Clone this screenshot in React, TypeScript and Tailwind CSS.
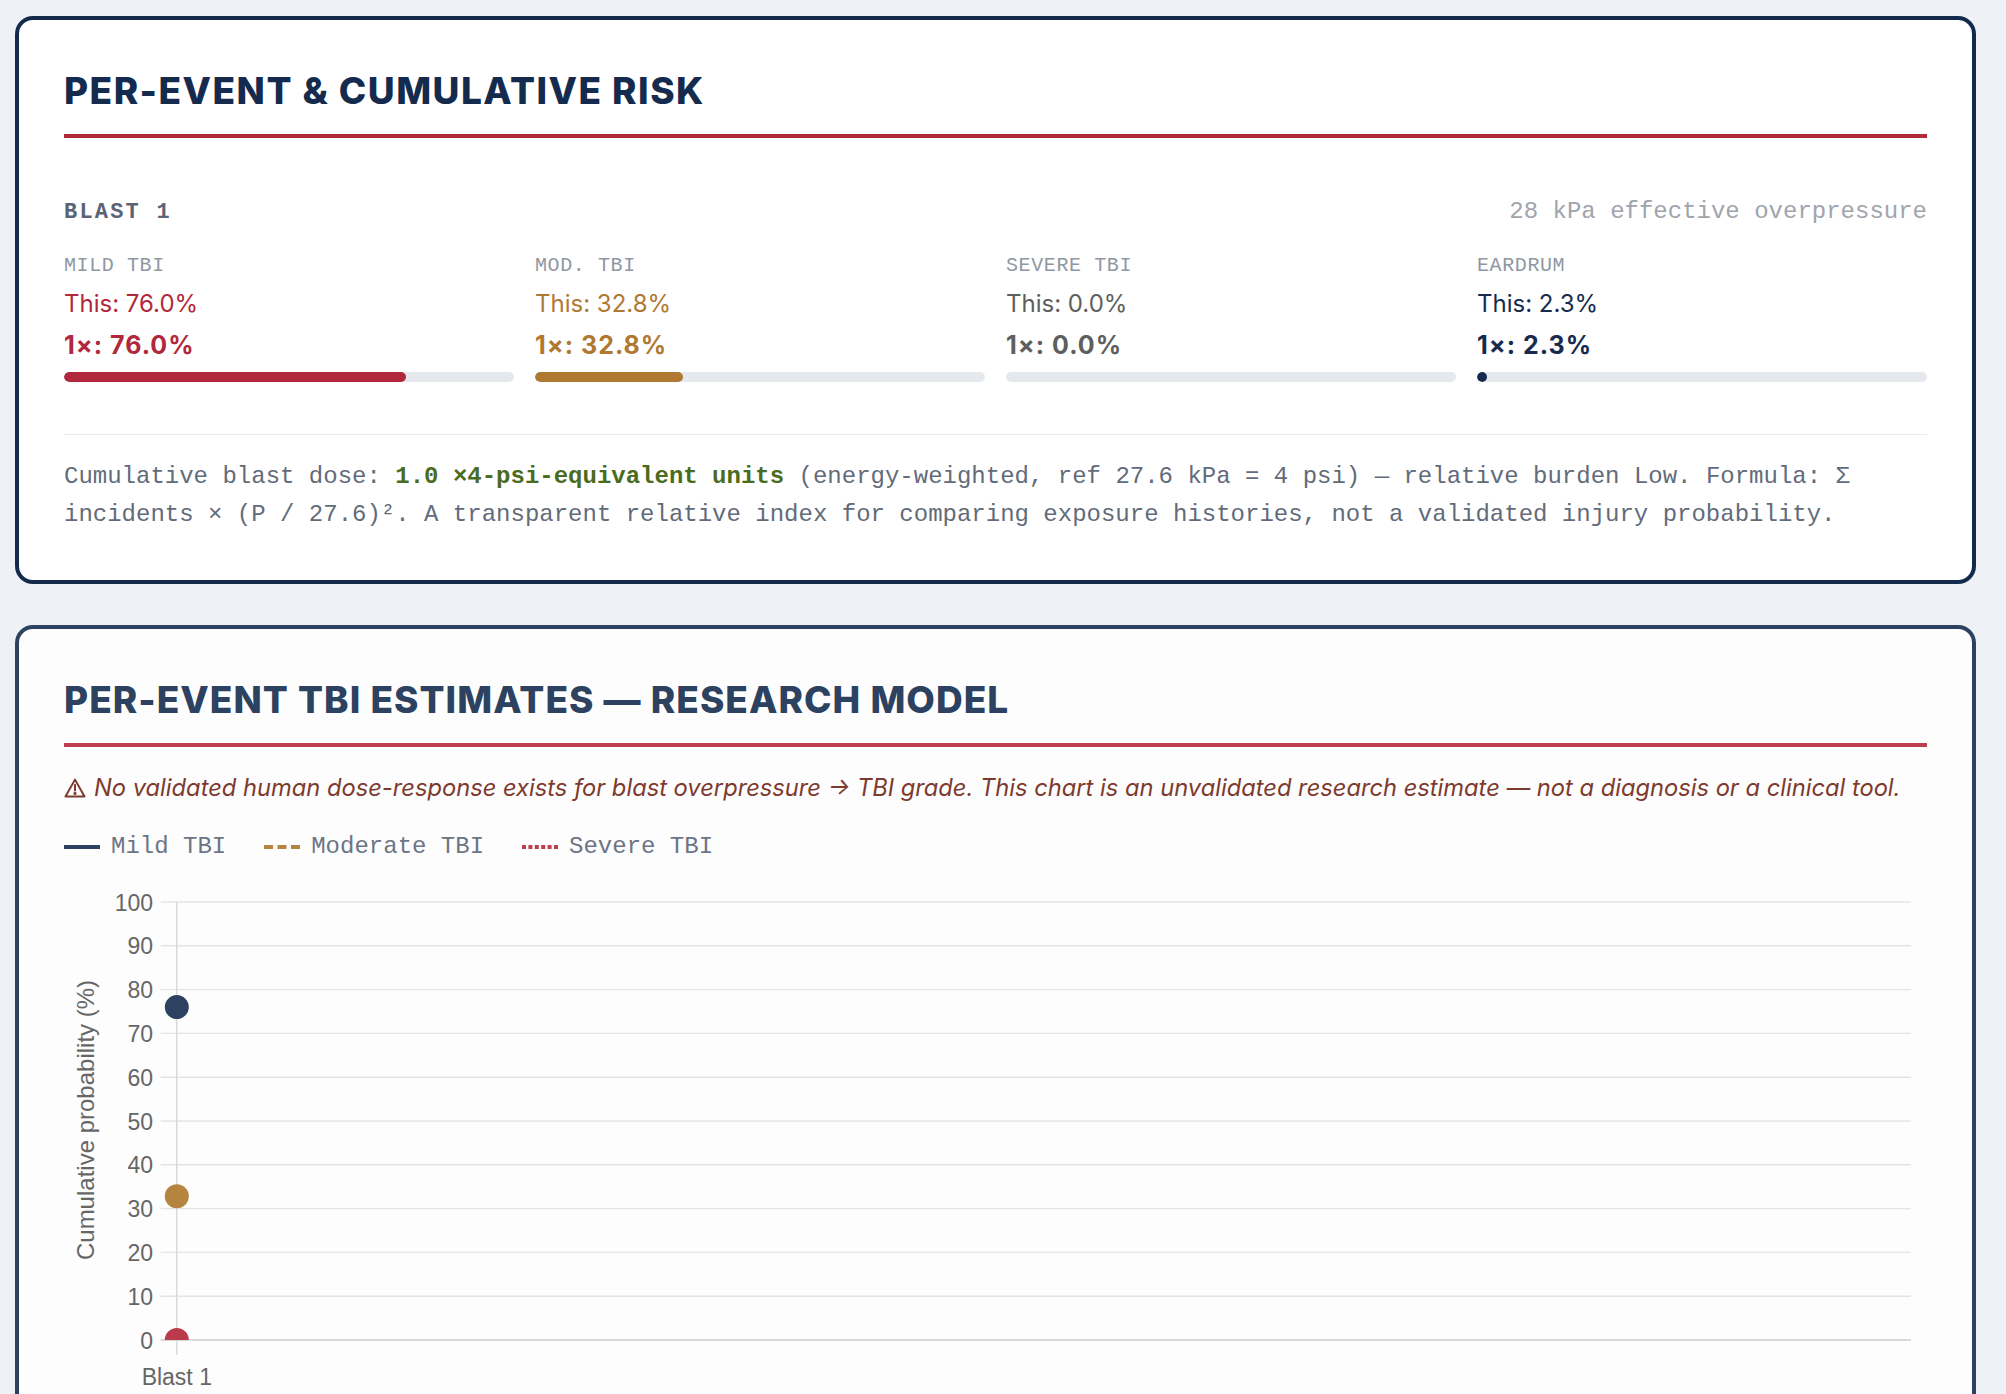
import React from "react";

const MONO = "[font-family:'Liberation_Mono','Courier_New',monospace]";

type Metric = {
  label: string;
  pct: number;
  color: string;
  text: string;
};

const metrics: Metric[] = [
  { label: "MILD TBI", pct: 76.0, color: "bg-[#b1283c]", text: "text-[#b1283c]" },
  { label: "MOD. TBI", pct: 32.8, color: "bg-[#b07932]", text: "text-[#b07932]" },
  { label: "SEVERE TBI", pct: 0.0, color: "bg-[#5e5e5e]", text: "text-[#5e5e5e]" },
  { label: "EARDRUM", pct: 2.3, color: "bg-[#162b4d]", text: "text-[#162b4d]" },
];

function MetricCol({ m }: { m: Metric }) {
  return (
    <div className="flex flex-col">
      <div className="[font-family:'Liberation_Mono','Courier_New',monospace] text-[20px] leading-[28px] text-[#8f97a3] tracking-[0.03em]">
        {m.label}
      </div>
      <div className={`[font-family:Inter,'Liberation_Sans',sans-serif] mt-[8px] text-[24px] leading-[32px] ${m.text}`}>
        This: {m.pct.toFixed(1)}%
      </div>
      <div
        className={`[font-family:Inter,'Liberation_Sans',sans-serif] mt-[8px] text-[25px] leading-[34px] font-bold tracking-[0.04em] ${m.text}`}
      >
        1×: {m.pct.toFixed(1)}%
      </div>
      <div className="mt-[10px] h-[10px] w-full rounded-full bg-[#e5e9ee] overflow-hidden">
        <div
          className={`h-full rounded-full ${m.color}`}
          style={{ width: m.pct > 0 ? `max(${m.pct}%, 10px)` : "0%" }}
        />
      </div>
    </div>
  );
}

function Chart() {
  const yOf = (v: number) => 460 - 4.38 * v;
  const ticks = [0, 10, 20, 30, 40, 50, 60, 70, 80, 90, 100];
  const axisX = 112.8;
  return (
    <svg width={1863} height={540} className="block" style={{ fontFamily: "'Liberation Sans', Arial, sans-serif" }}>
      <defs>
        <clipPath id="plotArea">
          <rect x={0} y={0} width={1863} height={460} />
        </clipPath>
      </defs>
      {ticks.map((t) => (
        <line
          key={`g${t}`}
          x1={96.7}
          x2={1847}
          y1={yOf(t)}
          y2={yOf(t)}
          stroke={t === 0 ? "#cdcdcd" : "#e4e4e4"}
          strokeWidth={1.4}
        />
      ))}
      <line x1={axisX} x2={axisX} y1={yOf(100)} y2={475} stroke="#d8d8d8" strokeWidth={1.4} />
      {ticks.map((t) => (
        <text key={`t${t}`} x={89} y={yOf(t) + 8.5} textAnchor="end" fontSize={23} fill="#666666">
          {t}
        </text>
      ))}
      <text transform="translate(30,240) rotate(-90)" textAnchor="middle" fontSize={24} fill="#666666">
        Cumulative probability (%)
      </text>
      <text x={axisX} y={505} textAnchor="middle" fontSize={23} fill="#666666">
        Blast 1
      </text>
      <g clipPath="url(#plotArea)">
        <circle cx={axisX} cy={yOf(0)} r={12} fill="#b83a4b" />
        <circle cx={axisX} cy={yOf(32.8)} r={12} fill="#b5843f" />
        <circle cx={axisX} cy={yOf(76.0)} r={12} fill="#2c4260" />
      </g>
    </svg>
  );
}

function LegendItem({ kind, label }: { kind: "solid" | "dash" | "dot"; label: string }) {
  return (
    <div className="flex items-center">
      <svg width={36} height={6} className="block">
        {kind === "solid" && <line x1={0} x2={36} y1={3} y2={3} stroke="#2c4260" strokeWidth={4} />}
        {kind === "dash" && (
          <line x1={0} x2={36} y1={3} y2={3} stroke="#b5843f" strokeWidth={4} strokeDasharray="9 4.5" />
        )}
        {kind === "dot" && (
          <line x1={0} x2={36} y1={3} y2={3} stroke="#bd3f4f" strokeWidth={4} strokeDasharray="4 2.4" />
        )}
      </svg>
      <span className="ml-[11px] [font-family:'Liberation_Mono','Courier_New',monospace] text-[24px] leading-[33.6px] text-[#6b7585]">
        {label}
      </span>
    </div>
  );
}

function WarnIcon() {
  return (
    <svg
      width={22}
      height={20}
      viewBox="0 0 21 19"
      className="inline-block align-[-2px] mr-[8px]"
      fill="none"
      stroke="#7d3a2e"
      strokeWidth={1.9}
      strokeLinejoin="round"
    >
      <path d="M10.5 1.5 L19.6 17.6 L1.4 17.6 Z" />
      <line x1={10.5} y1={6.5} x2={10.5} y2={12} strokeLinecap="round" />
      <circle cx={10.5} cy={14.7} r={0.6} fill="#7d3a2e" />
    </svg>
  );
}

export default function App() {
  return (
    <div className="min-h-screen bg-[#eef1f6] pl-[15px] pr-[30px] pt-[16px] pb-10">
      <section className="rounded-[18px] border-4 border-[#132a4c] bg-white px-[45px] pt-[48px] pb-[45px]">
        <h2 className="[font-family:Inter,'Liberation_Sans',sans-serif] border-b-4 border-[#b22a3a] pb-[21px] text-[37px] leading-[45px] font-extrabold uppercase tracking-[0.04em] text-[#152b4e]">
          Per-Event &amp; Cumulative Risk
        </h2>

        <div className="mt-[57px] flex items-baseline justify-between">
          <span className={`${MONO} text-[22px] leading-[33px] font-bold tracking-[0.1em] text-[#5b6475]`}>BLAST 1</span>
          <span className={`${MONO} text-[24px] leading-[33px] text-[#a0a4ad]`}>28 kPa effective overpressure</span>
        </div>

        <div className="mt-[23px] grid grid-cols-4 gap-x-[21px]">
          {metrics.map((m) => (
            <MetricCol key={m.label} m={m} />
          ))}
        </div>

        <div className="mt-[52px] border-t border-[#e6e9ee] pt-[23px]">
          <p className={`${MONO} text-[24px] leading-[38.4px] text-[#626b7a]`}>
            Cumulative blast dose: <b className="font-bold text-[#4b6b1e]">1.0 ×4-psi-equivalent units</b> (energy-weighted, ref
            27.6 kPa = 4 psi) — relative burden Low. Formula: Σ incidents × (P / 27.6)². A transparent relative index for
            comparing exposure histories, not a validated injury probability.
          </p>
        </div>
      </section>

      <section className="mt-[41px] rounded-[18px] border-4 border-[#2c4260] bg-[#fdfdfd] px-[45px] pt-[48px] pb-[45px]">
        <h2 className="[font-family:Inter,'Liberation_Sans',sans-serif] border-b-4 border-[#bd3f4f] pb-[21px] text-[37px] leading-[45px] font-extrabold uppercase tracking-[0.028em] text-[#2c4260]">
          Per-Event TBI Estimates — Research Model
        </h2>

        <p className="mt-[24px] [font-family:Inter,'Liberation_Sans',sans-serif] italic text-[23.7px] leading-[34.5px] text-[#7d3a2e]">
          <WarnIcon />
          No validated human dose-response exists for blast overpressure → TBI grade. This chart is an unvalidated research
          estimate — not a diagnosis or a clinical tool.
        </p>

        <div className="mt-[25px] flex items-center gap-x-[38px]">
          <LegendItem kind="solid" label="Mild TBI" />
          <LegendItem kind="dash" label="Moderate TBI" />
          <LegendItem kind="dot" label="Severe TBI" />
        </div>

        <div className="mt-[16px]">
          <Chart />
        </div>
      </section>
    </div>
  );
}
